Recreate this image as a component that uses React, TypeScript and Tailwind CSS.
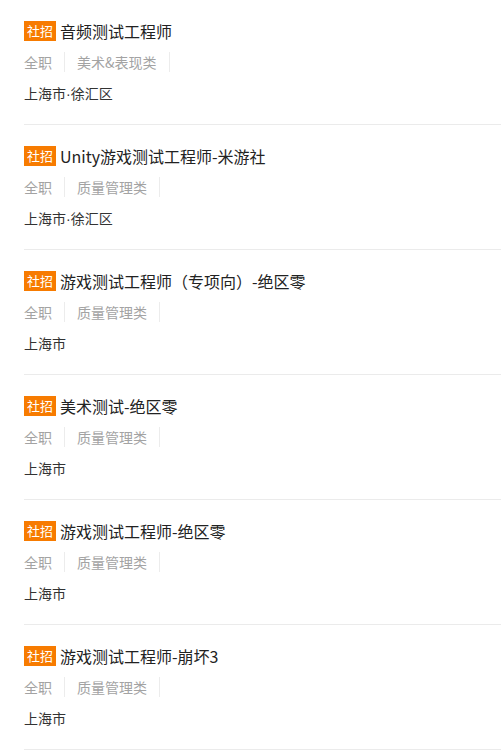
const jobs = [
  { title: "音频测试工程师", category: "美术&表现类", location: "上海市·徐汇区" },
  { title: "Unity游戏测试工程师-米游社", category: "质量管理类", location: "上海市·徐汇区" },
  { title: "游戏测试工程师（专项向）-绝区零", category: "质量管理类", location: "上海市" },
  { title: "美术测试-绝区零", category: "质量管理类", location: "上海市" },
  { title: "游戏测试工程师-绝区零", category: "质量管理类", location: "上海市" },
  { title: "游戏测试工程师-崩坏3", category: "质量管理类", location: "上海市" },
];

const font = "font-['Noto_Sans_CJK_SC','Microsoft_YaHei',sans-serif]";

// the middle dot is full width in the CJK font, so draw it with a latin one
function Location({ text }: { text: string }) {
  const parts = text.split("·");
  return (
    <>
      {parts.map((p, i) => (
        <span key={i}>
          {i > 0 && <span className="font-['Liberation_Sans',sans-serif]">·</span>}
          {p}
        </span>
      ))}
    </>
  );
}

export default function App() {
  return (
    <div className={`min-h-screen bg-white pl-6 ${font}`}>
      {jobs.map((job, i) => (
        <div key={i} className="pt-[21px] border-b border-[#ebebeb]">
          {/* title */}
          <div className="flex items-center h-5">
            <span className="flex items-center justify-center h-5 w-8 bg-[#f77b00] text-white text-[13px] leading-5">
              社招
            </span>
            <span className="ml-1 text-base leading-5 text-[#222]">{job.title}</span>
          </div>

          {/* meta */}
          <div className="mt-[11px] flex items-center h-5 text-sm leading-5 text-[#a3a3a3]">
            <span className="pr-3 border-r border-[#ececec]">全职</span>
            <span className="px-3 border-r border-[#ececec]">{job.category}</span>
          </div>

          {/* location */}
          <div className="mt-[11px] mb-[21px] h-5 text-sm leading-5 text-[#333]">
            <Location text={job.location} />
          </div>
        </div>
      ))}
    </div>
  );
}
